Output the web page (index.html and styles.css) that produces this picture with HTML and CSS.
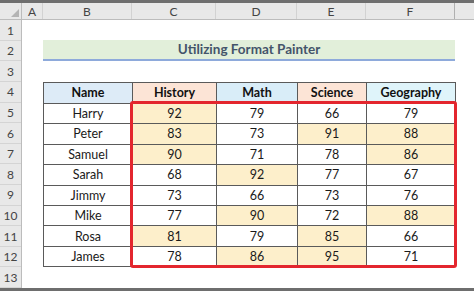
FILE: index.html
```html
<!DOCTYPE html>
<html>
<head>
<meta charset="utf-8">
<link rel="stylesheet" href="styles.css">
</head>
<body>
<div class="frame">
  <div class="colheads">
    <div class="corner"><svg width="8" height="8" viewBox="0 0 8 8"><polygon points="8,0 8,8 0,8" fill="#b4b4b4"/></svg></div>
    <div class="ch col-a">A</div>
    <div class="ch col-b">B</div>
    <div class="ch col-c">C</div>
    <div class="ch col-d">D</div>
    <div class="ch col-e">E</div>
    <div class="ch col-f">F</div>
    <div class="ch col-g"></div>
  </div>
  <div class="main">
    <div class="rowheads">
      <div class="rh">1</div><div class="rh">2</div><div class="rh">3</div><div class="rh">4</div>
      <div class="rh">5</div><div class="rh">6</div><div class="rh">7</div><div class="rh">8</div>
      <div class="rh">9</div><div class="rh">10</div><div class="rh">11</div><div class="rh">12</div>
      <div class="rh">13</div>
    </div>
    <div class="area">
      <div class="srow"></div>
      <div class="srow"><div class="title">Utilizing Format Painter</div></div>
      <div class="srow"></div>
      <div class="table">
        <div class="c hd blue">Name</div><div class="c hd peach">History</div><div class="c hd blue2">Math</div><div class="c hd peach">Science</div><div class="c hd cyan">Geography</div>
        <div class="c">Harry</div><div class="c hl">92</div><div class="c">79</div><div class="c">66</div><div class="c">79</div>
        <div class="c">Peter</div><div class="c hl">83</div><div class="c">73</div><div class="c hl">91</div><div class="c hl">88</div>
        <div class="c">Samuel</div><div class="c hl">90</div><div class="c">71</div><div class="c">78</div><div class="c hl">86</div>
        <div class="c">Sarah</div><div class="c">68</div><div class="c hl">92</div><div class="c">77</div><div class="c">67</div>
        <div class="c">Jimmy</div><div class="c">73</div><div class="c">66</div><div class="c">73</div><div class="c">76</div>
        <div class="c">Mike</div><div class="c">77</div><div class="c hl">90</div><div class="c">72</div><div class="c hl">88</div>
        <div class="c">Rosa</div><div class="c hl">81</div><div class="c">79</div><div class="c hl">85</div><div class="c">66</div>
        <div class="c">James</div><div class="c">78</div><div class="c hl">86</div><div class="c hl">95</div><div class="c">71</div>
        <div class="redbox"></div>
      </div>
    </div>
  </div>
</div>
</body>
</html>
```
FILE: styles.css
```css
* { box-sizing: border-box; }
html, body { margin: 0; padding: 0; background: #ffffff; }
body { font-family: "Lato", "Liberation Sans", sans-serif; }

.frame {
  width: 474px;
  height: 291px;
  border-top: 3px solid #6e6e6e;
  border-bottom: 3px solid #6e6e6e;
  background: #ffffff;
  overflow: hidden;
  display: flex;
  flex-direction: column;
}

.colheads {
  display: flex;
  height: 19px;
  background: #e8e8e8;
  border-bottom: 1px solid #bcbcbc;
}
.corner {
  width: 22px;
  border-right: 1px solid #bcbcbc;
  display: flex;
  align-items: flex-end;
  justify-content: flex-end;
  padding: 0 2px 2px 0;
}
.ch {
  border-right: 1px solid #d2d2d2;
  font-size: 12px;
  color: #444444;
  display: flex;
  align-items: center;
  justify-content: center;
}
.col-a { width: 21px; }
.col-b { width: 89px; }
.col-c { width: 84px; }
.col-d { width: 81px; }
.col-e { width: 69px; }
.col-f { width: 89px; border-right-color: #b0b0b0; }
.col-g { flex: 1; border-right: none; }

.main {
  display: flex;
  flex: 1;
}
.rowheads {
  width: 22px;
  background: #e8e8e8;
  border-right: 1px solid #bcbcbc;
  display: flex;
  flex-direction: column;
}
.rh {
  height: 20.6px;
  flex: none;
  border-bottom: 1px solid #d4d4d4;
  font-size: 12px;
  color: #444444;
  display: flex;
  align-items: center;
  justify-content: center;
}

.area {
  padding-left: 21px;
  display: flex;
  flex-direction: column;
}
.srow {
  height: 20.6px;
  flex: none;
}
.title {
  width: 412px;
  height: 21px;
  margin-top: -1px;
  background: #e2efda;
  border-bottom: 2px solid #8eaadb;
  color: #44546a;
  font-weight: 700;
  font-size: 13.5px;
  display: flex;
  align-items: center;
  justify-content: center;
}

.table {
  position: relative;
  width: 413px;
  height: 185.4px;
  display: grid;
  grid-template-columns: 88px 83px 80px 68px 88px;
  grid-template-rows: repeat(9, 1fr);
  gap: 1px;
  padding: 1px;
  background: #5a5a5a;
  flex: none;
}
.c {
  background: #ffffff;
  font-size: 12.5px;
  color: #1a1a1a;
  display: flex;
  align-items: center;
  justify-content: center;
}
.hd { font-weight: 700; color: #111111; }
.blue { background: #ddebf7; }
.blue2 { background: #d9edf8; }
.peach { background: #fce4d6; }
.cyan { background: #dff4fa; }
.hl { background: #fdefcb; }

.redbox {
  position: absolute;
  left: 87px;
  top: 19.2px;
  right: -1px;
  bottom: -1px;
  border: 3px solid #e3262e;
  border-radius: 3px;
  pointer-events: none;
}
```
